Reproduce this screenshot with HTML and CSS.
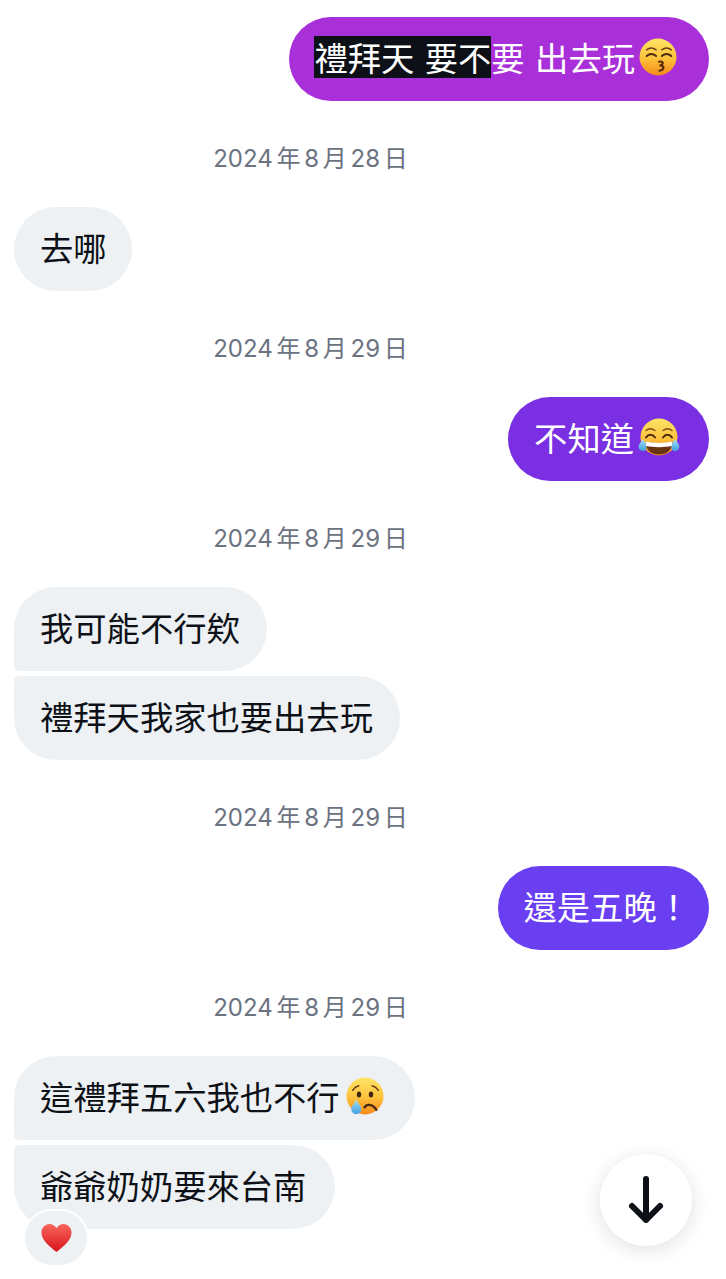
FILE: index.html
```html
<!DOCTYPE html>
<html lang="zh-Hant">
<head>
<meta charset="utf-8">
<title>Chat</title>
<link rel="stylesheet" href="styles.css">
</head>
<body>
<svg class="defs" width="0" height="0" aria-hidden="true">
  <defs>
    <linearGradient id="skin" x1="0" y1="0" x2="0" y2="1">
      <stop offset="0" stop-color="#fde567"/>
      <stop offset="0.55" stop-color="#fdc13a"/>
      <stop offset="1" stop-color="#f58a1c"/>
    </linearGradient>
    <linearGradient id="drop" x1="0" y1="0" x2="0" y2="1">
      <stop offset="0" stop-color="#a9dff7"/>
      <stop offset="1" stop-color="#3f9fe0"/>
    </linearGradient>
    <linearGradient id="red" x1="0" y1="0" x2="0" y2="1">
      <stop offset="0" stop-color="#f8655c"/>
      <stop offset="1" stop-color="#d9141c"/>
    </linearGradient>
    <symbol id="kiss" viewBox="0 0 40 40">
      <circle cx="20" cy="20" r="19.500" fill="url(#skin)"/>
      <path d="M8 12.500c3-2.400 7-2.400 10 0M24 12.500c3-2.400 7-2.400 10 0" fill="none" stroke="#6b3a14" stroke-width="1.500" stroke-linecap="round"/>
      <path d="M8 19c3-2.600 7-2.600 10 0M24 19c3-2.600 7-2.600 10 0" fill="none" stroke="#4a2a10" stroke-width="2" stroke-linecap="round"/>
      <path d="M21 25c4.500-1.200 5.500 2.600 1.500 3.800 4.500.5 4.500 4.700-1 5.700" fill="none" stroke="#5a2a0c" stroke-width="2.200" stroke-linecap="round" stroke-linejoin="round"/>
    </symbol>
    <symbol id="joy" viewBox="0 0 44 40">
      <circle cx="22" cy="20" r="18.500" fill="url(#skin)"/>
      <path d="M9 13.500c2.500-2 6-2.300 9 0M26 13.500c3-2.300 6.500-2 9 0" fill="none" stroke="#7a4a18" stroke-width="1.300" stroke-linecap="round"/>
      <path d="M9 20.500c2.500-3.600 6.500-3.600 9 0M26 20.500c2.500-3.600 6.500-3.600 9 0" fill="none" stroke="#4a2a10" stroke-width="2" stroke-linecap="round"/>
      <path d="M8 24.500c9 2 19 2 28 0-.5 8.500-6.500 13-14 13S8.500 33 8 24.500z" fill="#6a3412"/>
      <path d="M8.300 24.600c8.700 1.900 18.700 1.900 27.400 0l-.7 4.400c-8 1.500-18 1.500-26 0z" fill="#fff"/>
      <path d="M6 22c-1.500 3-4.800 5-4.300 8.500.4 3 3.800 4.500 6.300 3 3-1.800 1.500-6-2-11.500zM38 22c1.500 3 4.800 5 4.300 8.500-.4 3-3.800 4.500-6.300 3-3-1.800-1.500-6 2-11.500z" fill="url(#drop)"/>
    </symbol>
    <symbol id="cry" viewBox="0 0 40 40">
      <circle cx="20" cy="20" r="19.500" fill="url(#skin)"/>
      <path d="M7 14c1.500-2.400 3.700-4 6.500-4.800M27.500 9.200c2.800.8 5 2.400 6.500 4.800" fill="none" stroke="#6b3a14" stroke-width="1.500" stroke-linecap="round"/>
      <ellipse cx="13.700" cy="18.400" rx="2.300" ry="3.200" fill="#3f2410"/>
      <ellipse cx="26.300" cy="18.400" rx="2.300" ry="3.200" fill="#3f2410"/>
      <path d="M19.500 32c2-3.800 8-4.300 12.500 2.500" fill="none" stroke="#4a2a10" stroke-width="2.400" stroke-linecap="round"/>
      <path d="M10.800 23.500c-1.300 4-5.300 7-5.300 10.500a5.300 5.300 0 0 0 10.600 0c0-3.500-4-6.500-5.300-10.500z" fill="url(#drop)"/>
    </symbol>
  </defs>
</svg>

<main class="thread">
  <div class="row row-out">
    <div class="bubble out out-a"><span class="selected">禮拜天 要不</span>要 出去玩<svg class="emoji emoji-kiss"><use href="#kiss"/></svg></div>
  </div>

  <p class="date">2024 年 8 月 28 日</p>
  <div class="row">
    <div class="bubble in short">去哪</div>
  </div>

  <p class="date">2024 年 8 月 29 日</p>
  <div class="row row-out">
    <div class="bubble out out-b">不知道<svg class="emoji emoji-joy"><use href="#joy"/></svg></div>
  </div>

  <p class="date">2024 年 8 月 29 日</p>
  <div class="row group">
    <div class="bubble in first">我可能不行欸</div>
    <div class="bubble in last">禮拜天我家也要出去玩</div>
  </div>

  <p class="date">2024 年 8 月 29 日</p>
  <div class="row row-out">
    <div class="bubble out out-c">還是五晚！</div>
  </div>

  <p class="date">2024 年 8 月 29 日</p>
  <div class="row group">
    <div class="bubble in first with-cry">這禮拜五六我也不行<svg class="emoji emoji-cry"><use href="#cry"/></svg></div>
    <div class="bubble in last reacted">爺爺奶奶要來台南<div class="reaction"><svg class="heart" viewBox="0 0 32 30"><path d="M16 29.500C9 23.500.5 17.500.5 9.200.5 4.200 4.300.5 8.800.5c3 0 5.700 1.600 7.200 4.500C17.500 2.100 20.200.5 23.200.5c4.500 0 8.300 3.700 8.300 8.700 0 8.300-8.500 14.300-15.500 20.300z" fill="url(#red)"/></svg></div></div>
  </div>
</main>

<button class="scroll-down" aria-label="Scroll to bottom">
  <svg viewBox="0 0 40 50" class="arrow"><path d="M20 4v41M6 31l14 14 14-14" fill="none" stroke="#0d1117" stroke-width="6" stroke-linecap="round" stroke-linejoin="round"/></svg>
</button>
</body>
</html>
```

FILE: styles.css
```css
* {
  box-sizing: border-box;
}

html,
body {
  margin: 0;
  height: 100%;
  background: #fff;
}

body {
  position: relative;
  overflow: hidden;
  font-family: "Noto Sans CJK TC", "Noto Sans", sans-serif;
}

.defs {
  position: absolute;
}

.thread {
  display: flex;
  flex-direction: column;
  padding: 17px 17px 0 14px;
}

.row {
  display: flex;
  flex-direction: column;
  align-items: flex-start;
}

.row-out {
  align-items: flex-end;
}

.group {
  gap: 5px;
}

.bubble {
  display: flex;
  align-items: center;
  height: 84px;
  padding: 0 27px 4px 26px;
  border-radius: 42px;
  font-size: 33.3px;
  line-height: 42px;
  white-space: nowrap;
  word-spacing: 3px;
}

.in {
  background: #eef1f4;
  color: #0d1117;
}

.short {
  padding-right: 25px;
}

.first {
  border-bottom-left-radius: 5px;
}

.last {
  border-top-left-radius: 5px;
}

.with-cry {
  padding-right: 31px;
}

.out {
  color: #fff;
}

.out-a {
  padding-left: 25px;
  padding-right: 32px;
  background: #a92fd9;
}

.out-b {
  padding-right: 28px;
  background: #7a30e2;
}

.out-c {
  padding-right: 19px;
  background: #6a3ff2;
}

.selected {
  background: #0d1117;
}

.emoji {
  flex: none;
  width: 38px;
  height: 38px;
  margin-left: 3px;
}

.emoji-kiss {
  margin-left: 4px;
}

.emoji-joy {
  width: 44px;
  height: 40px;
}

.emoji-cry {
  margin-left: 6px;
}

.reacted {
  position: relative;
  padding-right: 29px;
}

.reaction {
  position: absolute;
  left: 11px;
  top: 66px;
  display: flex;
  align-items: center;
  justify-content: center;
  width: 62px;
  height: 54px;
  border-radius: 27px;
  background: #eef1f4;
  box-shadow: 0 0 0 2px #fff;
}

.heart {
  width: 31px;
  height: 30px;
}

.date {
  height: 28px;
  margin: 44px 0 34px;
  padding-right: 102px;
  font-family: "Inter", "Noto Sans CJK TC", sans-serif;
  font-size: 24px;
  line-height: 28px;
  word-spacing: -3px;
  text-align: center;
  color: #6b7280;
}

.scroll-down {
  position: absolute;
  left: 600px;
  top: 1154px;
  display: flex;
  align-items: center;
  justify-content: center;
  width: 92px;
  height: 92px;
  padding: 0;
  border: 0;
  border-radius: 50%;
  background: #fff;
  box-shadow: 0 4px 20px rgba(0, 0, 0, 0.12);
}

.arrow {
  width: 40px;
  height: 50px;
}
```
